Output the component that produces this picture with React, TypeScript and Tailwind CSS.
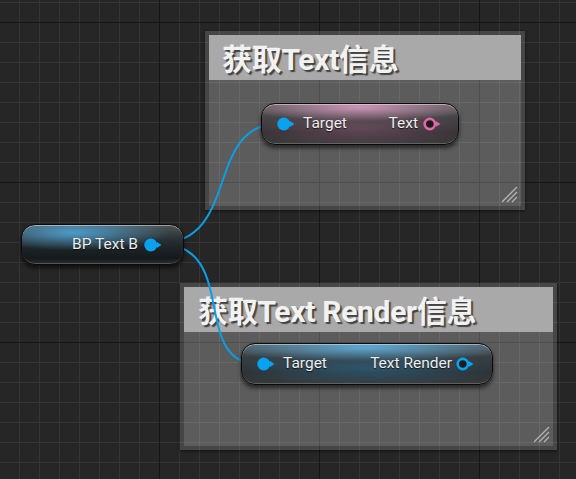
import type { ReactNode } from "react";

const titleFont = "font-['Roboto','Noto_Sans_CJK_SC',sans-serif]";
const nodeFont = "font-['Roboto','Liberation_Sans',sans-serif]";

const InPin = () => (
  <svg width="19" height="14" viewBox="0 0 19 14" className="shrink-0">
    <circle cx="6.8" cy="7" r="6.5" fill="#08a2ee" />
    <path d="M13 4 L17.5 7 L13 10 Z" fill="#08a2ee" />
  </svg>
);

const OutPin = ({ color }: { color: string }) => (
  <svg width="19" height="14" viewBox="0 0 19 14" className="shrink-0">
    <circle cx="6.8" cy="7" r="5.1" fill="#1d1a1c" stroke={color} strokeWidth="2.6" />
    <path d="M13 4.2 L17.5 7 L13 9.8 Z" fill={color} />
  </svg>
);

const Grip = () => (
  <svg
    width="18"
    height="18"
    viewBox="0 0 18 18"
    className="absolute bottom-[3px] right-[3px]"
  >
    <path
      d="M2 17 L17 2 M7 17 L17 7 M12 17 L17 12"
      stroke="#b4b4b4"
      strokeWidth="1.3"
    />
  </svg>
);

interface CommentProps {
  title: string;
  className: string;
  textClass: string;
}

const Comment = ({ title, className, textClass }: CommentProps) => (
  <div
    className={`absolute border-4 border-white/15 bg-white/25 bg-clip-padding shadow-[0_1px_3px_rgba(0,0,0,0.5)] ${className}`}
  >
    <div className={`flex h-[45px] items-center bg-[#a9a9a9] ${textClass}`}>
      <span
        className={`${titleFont} text-[30px] font-bold leading-none tracking-[-0.3px] text-[#f2f2f2] [text-shadow:2px_2px_1px_rgba(0,0,0,0.6)]`}
      >
        {title}
      </span>
    </div>
    <Grip />
  </div>
);

interface NodeProps {
  className: string;
  children: ReactNode;
}

const Node = ({ className, children }: NodeProps) => (
  <div
    className={`absolute flex items-center rounded-[14px] border-[1.5px] border-[#0b0b0b] shadow-[0_3px_4px_rgba(0,0,0,0.6),inset_0_1px_0_rgba(255,255,255,0.45),inset_0_-1px_0_rgba(255,255,255,0.2)] ${nodeFont} text-[15.5px] text-[#ededed] [text-shadow:0_1px_1px_rgba(0,0,0,0.7)] ${className}`}
  >
    {children}
  </div>
);

export default function App() {
  return (
    <div className="relative h-[479px] w-[576px] overflow-hidden bg-[#262626] [background-image:linear-gradient(to_right,#151515_1px,transparent_1px),linear-gradient(to_bottom,#151515_1px,transparent_1px),linear-gradient(to_right,#353535_1px,transparent_1px),linear-gradient(to_bottom,#353535_1px,transparent_1px)] [background-size:160px_160px,160px_160px,20px_20px,20px_20px] [background-position:159px_22px,159px_22px,19px_2px,19px_2px]">
      <Comment
        title="获取Text信息"
        className="left-[205px] top-[31px] h-[179px] w-[320px]"
        textClass="pl-[13px] pt-[4px]"
      />
      <Comment
        title="获取Text Render信息"
        className="left-[180px] top-[283px] h-[167px] w-[377px]"
        textClass="pl-[14px] pt-[4px]"
      />

      {/* wires */}
      <svg
        width="576"
        height="479"
        className="pointer-events-none absolute left-0 top-0"
        fill="none"
      >
        <path
          d="M160 243 C 240 243, 205 124, 278 124"
          stroke="#0a9fe4"
          strokeWidth="2"
        />
        <path
          d="M160 244 C 240 244, 190 364, 258 364"
          stroke="#0a9fe4"
          strokeWidth="2"
        />
      </svg>

      <Node className="left-[21px] top-[224px] h-[41px] w-[163px] justify-end pr-[20px] [background:radial-gradient(ellipse_60%_45%_at_32%_20%,rgba(80,165,215,0.9),transparent),linear-gradient(to_bottom,#4f5456_0%,#2a3236_35%,#1d2326_60%,#15191b_85%,#2c2c2c_100%)]">
        <span className="mr-[6px]">BP Text B</span>
        <InPin />
      </Node>

      <Node className="left-[261px] top-[103px] h-[42px] w-[198px] justify-between pl-[15px] pr-[16px] [background:radial-gradient(ellipse_60%_35%_at_50%_8%,rgba(225,160,200,0.85),transparent),radial-gradient(ellipse_55%_45%_at_50%_62%,rgba(160,100,135,0.4),transparent),linear-gradient(to_bottom,#5e5e5e_0%,#474447_35%,#363234_70%,#3c3c3c_100%)]">
        <div className="flex items-center gap-[7px]">
          <InPin />
          <span>Target</span>
        </div>
        <div className="flex items-center gap-[5px]">
          <span>Text</span>
          <OutPin color="#dc6aa8" />
        </div>
      </Node>

      <Node className="left-[241px] top-[343px] h-[42px] w-[252px] justify-between pl-[15px] pr-[17px] [background:radial-gradient(ellipse_60%_35%_at_50%_8%,rgba(95,178,225,0.9),transparent),radial-gradient(ellipse_55%_45%_at_50%_62%,rgba(45,125,170,0.45),transparent),linear-gradient(to_bottom,#565d61_0%,#373e42_35%,#2c3134_70%,#383a3a_100%)]">
        <div className="flex items-center gap-[7px]">
          <InPin />
          <span>Target</span>
        </div>
        <div className="flex items-center gap-[4px]">
          <span>Text Render</span>
          <OutPin color="#08a2ee" />
        </div>
      </Node>
    </div>
  );
}
